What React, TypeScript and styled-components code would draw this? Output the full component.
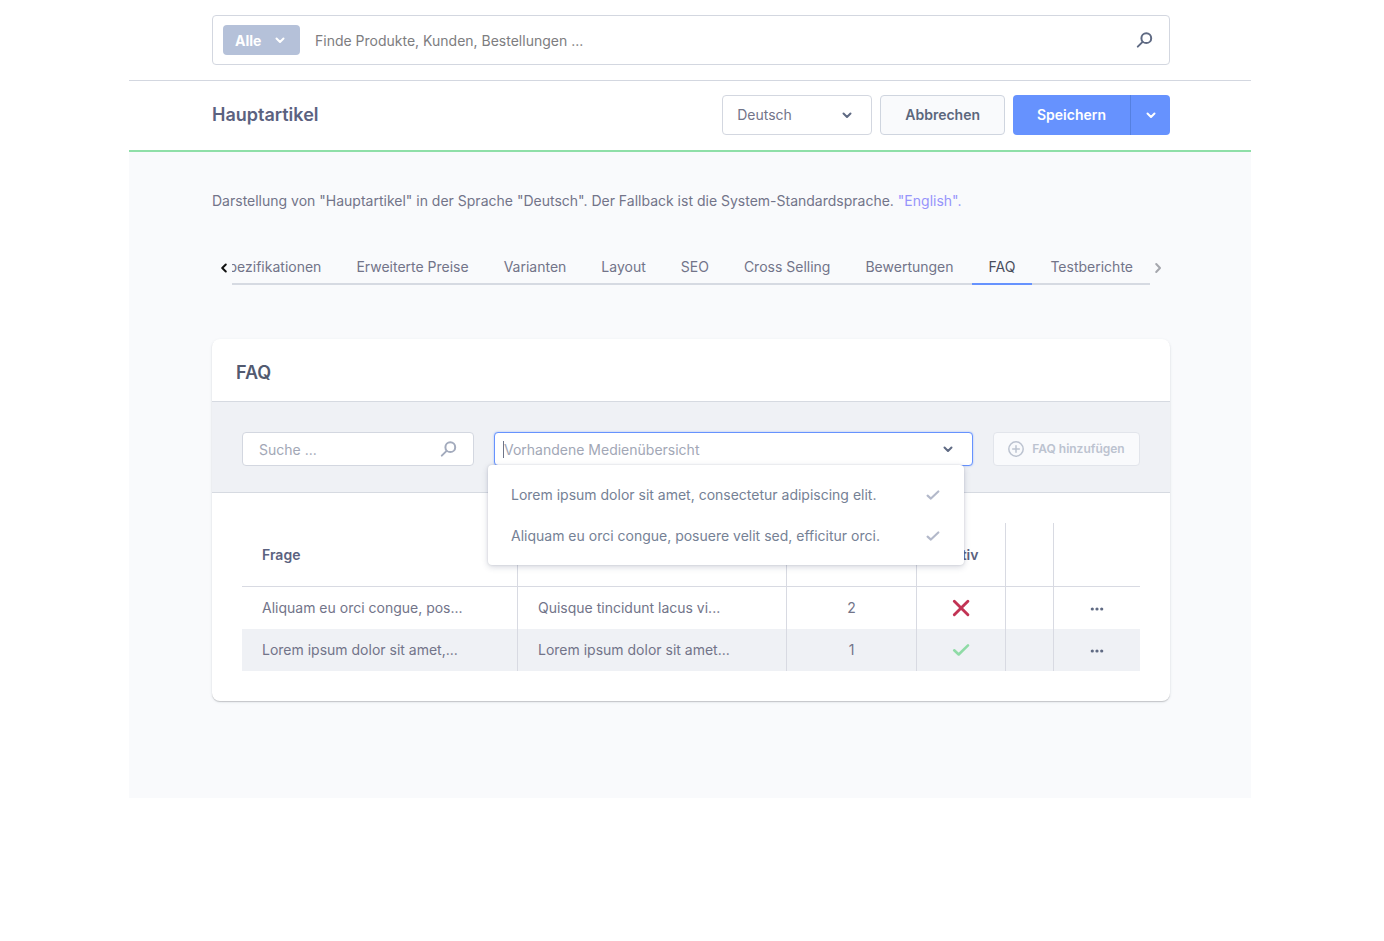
import React from "react";
import styled, { createGlobalStyle, css } from "styled-components";

const color = {
  text: "#758195",
  textDark: "#5c677c",
  heading: "#5b6280",
  border: "#d3d7e0",
  line: "#d8dae2",
  panel: "#eff1f5",
  page: "#f9fafc",
  primary: "#6692fe",
  icon: "#5f6a83",
  muted: "#a3abbd",
};

const GlobalStyle = createGlobalStyle`
  *, *::before, *::after { box-sizing: border-box; }
  body {
    margin: 0;
    background: #fff;
    color: #727489;
    font: 14px/20px Inter, "Liberation Sans", sans-serif;
  }
  button, input, select { font: inherit; color: inherit; margin: 0; }
  svg { display: block; flex: none; }
`;

const Frame = styled.div`
  margin: 0 133px 0 129px;
`;

const gutter = css`
  padding-left: 83px;
  padding-right: 81px;
`;

const TopBar = styled.header`
  ${gutter}
  padding-top: 15px;
  padding-bottom: 15px;
  border-bottom: 1px solid ${color.border};
`;

const GlobalSearch = styled.form`
  display: flex;
  align-items: center;
  height: 50px;
  padding: 0 16px 0 10px;
  border: 1px solid ${color.border};
  border-radius: 4px;
`;

const SelectWrap = styled.div`
  position: relative;
  display: flex;
  svg {
    position: absolute;
    top: 50%;
    transform: translateY(-50%);
    pointer-events: none;
  }
`;

const ScopeWrap = styled(SelectWrap)`
  color: #fff;
  svg { right: 14px; }
`;

const Scope = styled.select`
  appearance: none;
  width: 77px;
  height: 30px;
  padding: 2px 12px 0;
  border: 0;
  border-radius: 4px;
  background: #b5c1d9;
  font-weight: 700;
`;

const PlainInput = styled.input`
  flex: 1;
  min-width: 0;
  padding: 2px 0 0;
  border: 0;
  outline: 0;
  background: transparent;
`;

const GlobalInput = styled(PlainInput)`
  margin-left: 15px;
  &::placeholder { color: #7d7d80; opacity: 1; }
`;

const IconButton = styled.button`
  display: inline-flex;
  padding: 0;
  border: 0;
  background: transparent;
  color: ${color.icon};
  vertical-align: middle;
`;

const SmartBar = styled.div`
  ${gutter}
  display: flex;
  align-items: center;
  gap: 8px;
  height: 71px;
  padding-bottom: 1px;
  border-bottom: 2px solid #8fdfa8;
`;

const PageTitle = styled.h1`
  flex: 1;
  margin: 0;
  color: ${color.heading};
  font-size: 18px;
  font-weight: 600;
  line-height: 24px;
`;

const LanguageWrap = styled(SelectWrap)`
  color: ${color.icon};
  svg { right: 19px; }
`;

const Language = styled.select`
  appearance: none;
  width: 150px;
  height: 40px;
  padding: 0 14px;
  border: 1px solid ${color.border};
  border-radius: 4px;
  background: #fff;
  color: #727489;
`;

const Button = styled.button`
  height: 40px;
  padding: 0 24px;
  border: 1px solid #cfd5df;
  border-radius: 4px;
  background: ${color.page};
  color: ${color.textDark};
  font-weight: 600;
`;

const SplitButton = styled.div`
  display: flex;
  height: 40px;
  border-radius: 4px;
  background: ${color.primary};
  overflow: hidden;
`;

const SplitPart = styled.button<{ $menu?: boolean }>`
  display: flex;
  align-items: center;
  justify-content: center;
  width: ${(p) => (p.$menu ? "40px" : "117px")};
  padding: 0;
  border: 0;
  border-left: ${(p) => (p.$menu ? "1px solid #5580e0" : "0")};
  background: transparent;
  color: #fff;
  font-weight: 600;
`;

const Content = styled.main`
  ${gutter}
  padding-top: 39px;
  padding-bottom: 97px;
  background: ${color.page};
`;

const Notice = styled.p`
  margin: 0;
  a { color: #9694fb; text-decoration: none; }
`;

const Tabs = styled.nav`
  display: flex;
  align-items: center;
  margin-top: 40px;
`;

const TabArrow = styled.button<{ $end?: boolean }>`
  display: flex;
  justify-content: ${(p) => (p.$end ? "flex-start" : "flex-end")};
  width: 20px;
  padding: 0 4px;
  border: 0;
  background: transparent;
  color: ${(p) => (p.$end ? "#a5a7ad" : "#111")};
`;

const TabStrip = styled.div`
  flex: 1;
  min-width: 0;
  display: flex;
  justify-content: flex-end;
  gap: 1px;
  overflow: hidden;
  box-shadow: inset 0 -2px 0 #d6dae2;
`;

const Tab = styled.a<{ $active?: boolean }>`
  flex: none;
  height: 34px;
  padding: 6px 17px 0;
  border-bottom: 2px solid ${(p) => (p.$active ? color.primary : "transparent")};
  color: ${(p) => (p.$active ? "#4a4e5c" : "#727489")};
  text-decoration: none;
`;

const Card = styled.section`
  margin-top: 54px;
  border-radius: 8px;
  background: #fff;
  box-shadow: 0 1px 1px rgba(0, 0, 0, 0.16), 0 1px 3px rgba(60, 70, 100, 0.12);
`;

const CardTitle = styled.h2`
  margin: 0;
  padding: 22px 24px 16px;
  color: #525a70;
  font-size: 18px;
  font-weight: 600;
  line-height: 24px;
`;

const Toolbar = styled.div`
  display: flex;
  gap: 20px;
  padding: 30px 30px 26px;
  border: 1px solid #d6dae1;
  border-width: 1px 0;
  background: ${color.panel};
`;

const SearchBox = styled.div`
  display: flex;
  align-items: center;
  width: 232px;
  height: 34px;
  padding: 0 16px;
  border: 1px solid ${color.border};
  border-radius: 4px;
  background: #fff;
  color: ${color.muted};
`;

const MutedInput = styled(PlainInput)`
  &::placeholder { color: #a2a7b6; opacity: 1; }
`;

const Combo = styled.div`
  position: relative;
  flex: 1;
  display: flex;
  align-items: center;
  height: 34px;
  padding: 0 18px 0 8px;
  border: 1px solid ${color.primary};
  border-radius: 4px;
  background: #fff;
  color: ${color.icon};
  box-shadow: 0 0 2px rgba(102, 146, 254, 0.6);
`;

const Caret = styled.span`
  width: 1px;
  height: 17px;
  background: #6d7488;
`;

const Options = styled.ul`
  position: absolute;
  z-index: 1;
  top: 32px;
  left: -7px;
  right: 8px;
  margin: 0;
  padding: 9px 0;
  border-radius: 4px;
  background: #fff;
  box-shadow: 0 0 2px rgba(60, 70, 100, 0.2), 0 2px 6px rgba(60, 70, 100, 0.22);
  list-style: none;
`;

const Option = styled.li`
  display: flex;
  align-items: center;
  justify-content: space-between;
  height: 41px;
  padding: 0 24px 0 23px;
  color: ${color.text};
  svg { color: #b3b9ca; }
`;

const AddButton = styled.button`
  display: flex;
  align-items: center;
  justify-content: center;
  gap: 8px;
  width: 147px;
  height: 34px;
  padding: 0;
  border: 1px solid #e2e5eb;
  border-radius: 4px;
  background: ${color.page};
  color: #bcc3d0;
  font-size: 12px;
  font-weight: 600;
`;

const TableArea = styled.div`
  padding: 30px;
`;

const Grid = styled.table`
  width: 100%;
  table-layout: fixed;
  border-collapse: separate;
  border-spacing: 0;
`;

const Col = styled.col<{ $w?: number }>`
  width: ${(p) => (p.$w ? `${p.$w}px` : "auto")};
`;

const cell = css<{ $center?: boolean }>`
  padding: 0 20px;
  text-align: ${(p) => (p.$center ? "center" : "left")};
  border-right: 1px solid ${color.line};
  &:last-child { border-right: 0; }
`;

const Th = styled.th<{ $center?: boolean }>`
  ${cell}
  height: 64px;
  border-bottom: 1px solid ${color.line};
  color: ${color.heading};
  font-weight: 600;
`;

const Td = styled.td<{ $center?: boolean }>`
  ${cell}
  height: 42px;
  svg { margin: 0 auto; }
`;

const Row = styled.tr`
  &:nth-child(even) { background: ${color.panel}; }
`;

type StrokeProps = { d: string; w: number; h: number; sw?: number; label?: string };

const Stroke = ({ d, w, h, sw = 2, label }: StrokeProps) => (
  <svg width={w} height={h} viewBox={`0 0 ${w} ${h}`} fill="none" stroke="currentColor" strokeWidth={sw}
    strokeLinecap="round" strokeLinejoin="round" role={label ? "img" : undefined} aria-label={label} aria-hidden={label ? undefined : true}>
    <path d={d} />
  </svg>
);

const Chevron = () => <Stroke w={12} h={8} d="M2.5 2.5 L6 6 L9.5 2.5" />;

const Magnifier = () => (
  <svg width="17" height="17" viewBox="0 0 17 17" fill="none" stroke="currentColor" strokeWidth="2" strokeLinecap="round" aria-hidden="true">
    <circle cx="10.3" cy="6.2" r="4.9" />
    <path d="M6.6 9.9 L1.8 14.6" />
  </svg>
);

const PlusCircle = () => (
  <svg width="16" height="16" viewBox="0 0 16 16" fill="none" stroke="currentColor" strokeWidth="1.5" strokeLinecap="round" aria-hidden="true">
    <circle cx="8" cy="8" r="7.2" />
    <path d="M8 4.7 V11.3 M4.7 8 H11.3" />
  </svg>
);

const Check = () => <Stroke w={14} h={11} sw={2.1} d="M1.6 6.6 L4.9 9.6 L12.3 2.4" />;

const Dots = () => (
  <svg width="14" height="4" viewBox="0 0 14 4" fill="currentColor" aria-hidden="true">
    <circle cx="2.3" cy="2" r="1.6" />
    <circle cx="7" cy="2" r="1.6" />
    <circle cx="11.7" cy="2" r="1.6" />
  </svg>
);

const StatusIcon = styled.span<{ $on: boolean }>`
  display: block;
  color: ${(p) => (p.$on ? "#8fdba6" : "#c23354")};
`;

const Status = ({ on }: { on: boolean }) => (
  <StatusIcon $on={on}>
    {on ? (
      <Stroke w={18} h={14} sw={2.6} label="Aktiv" d="M2.2 7.3 L6.7 11.5 L16 2.4" />
    ) : (
      <Stroke w={18} h={18} sw={2.9} label="Inaktiv" d="M2.3 2.3 L15.9 15.7 M15.9 2.3 L2.3 15.7" />
    )}
  </StatusIcon>
);

const tabs = ["Spezifikationen", "Erweiterte Preise", "Varianten", "Layout", "SEO", "Cross Selling", "Bewertungen", "FAQ", "Testberichte"];

const options = [
  "Lorem ipsum dolor sit amet, consectetur adipiscing elit.",
  "Aliquam eu orci congue, posuere velit sed, efficitur orci.",
];

const rows = [
  { question: "Aliquam eu orci congue, pos...", answer: "Quisque tincidunt lacus vi...", position: 2, active: false },
  { question: "Lorem ipsum dolor sit amet,...", answer: "Lorem ipsum dolor sit amet...", position: 1, active: true },
];

export default function App() {
  return (
    <>
      <GlobalStyle />
      <Frame>
        <TopBar>
          <GlobalSearch role="search">
            <ScopeWrap>
              <Scope aria-label="Suchbereich">
                <option>Alle</option>
              </Scope>
              <Chevron />
            </ScopeWrap>
            <GlobalInput type="text" aria-label="Globale Suche" placeholder="Finde Produkte, Kunden, Bestellungen ..." />
            <IconButton type="button" aria-label="Suchen">
              <Magnifier />
            </IconButton>
          </GlobalSearch>
        </TopBar>

        <SmartBar>
          <PageTitle>Hauptartikel</PageTitle>
          <LanguageWrap>
            <Language aria-label="Sprache">
              <option>Deutsch</option>
            </Language>
            <Chevron />
          </LanguageWrap>
          <Button type="button">Abbrechen</Button>
          <SplitButton>
            <SplitPart type="button">Speichern</SplitPart>
            <SplitPart type="button" $menu aria-label="Weitere Speicheroptionen">
              <Chevron />
            </SplitPart>
          </SplitButton>
        </SmartBar>

        <Content>
          <Notice>
            Darstellung von "Hauptartikel" in der Sprache "Deutsch". Der Fallback ist die System-Standardsprache.{" "}
            <a href="#english">"English".</a>
          </Notice>

          <Tabs aria-label="Produktbereiche">
            <TabArrow type="button" aria-label="Zurück">
              <Stroke w={8} h={12} d="M5.8 2.5 L2.2 6 L5.8 9.5" />
            </TabArrow>
            <TabStrip>
              {tabs.map((t) => (
                <Tab key={t} href={`#${t}`} $active={t === "FAQ"} aria-current={t === "FAQ" ? "page" : undefined}>
                  {t}
                </Tab>
              ))}
            </TabStrip>
            <TabArrow type="button" $end aria-label="Weiter">
              <Stroke w={8} h={12} d="M2.2 2 L6 6 L2.2 10" />
            </TabArrow>
          </Tabs>

          <Card>
            <CardTitle>FAQ</CardTitle>
            <Toolbar>
              <SearchBox>
                <MutedInput type="text" aria-label="Suche" placeholder="Suche ..." />
                <Magnifier />
              </SearchBox>
              <Combo>
                <Caret />
                <MutedInput type="text" role="combobox" aria-expanded="true" aria-controls="faq-options" aria-label="Vorhandene Medienübersicht" placeholder="Vorhandene Medienübersicht" />
                <Chevron />
                <Options id="faq-options" role="listbox">
                  {options.map((o) => (
                    <Option key={o} role="option" aria-selected="true">
                      {o}
                      <Check />
                    </Option>
                  ))}
                </Options>
              </Combo>
              <AddButton type="button" disabled>
                <PlusCircle />
                FAQ hinzufügen
              </AddButton>
            </Toolbar>
            <TableArea>
              <Grid>
                <colgroup>
                  <Col $w={276} />
                  <Col />
                  <Col $w={130} />
                  <Col $w={89} />
                  <Col $w={48} />
                  <Col $w={86} />
                </colgroup>
                <thead>
                  <tr>
                    <Th scope="col">Frage</Th>
                    <Th />
                    <Th />
                    <Th scope="col" $center>Aktiv</Th>
                    <Th />
                    <Th />
                  </tr>
                </thead>
                <tbody>
                  {rows.map((r) => (
                    <Row key={r.position}>
                      <Td>{r.question}</Td>
                      <Td>{r.answer}</Td>
                      <Td $center>{r.position}</Td>
                      <Td $center>
                        <Status on={r.active} />
                      </Td>
                      <Td />
                      <Td $center>
                        <IconButton type="button" aria-label="Aktionen">
                          <Dots />
                        </IconButton>
                      </Td>
                    </Row>
                  ))}
                </tbody>
              </Grid>
            </TableArea>
          </Card>
        </Content>
      </Frame>
    </>
  );
}
